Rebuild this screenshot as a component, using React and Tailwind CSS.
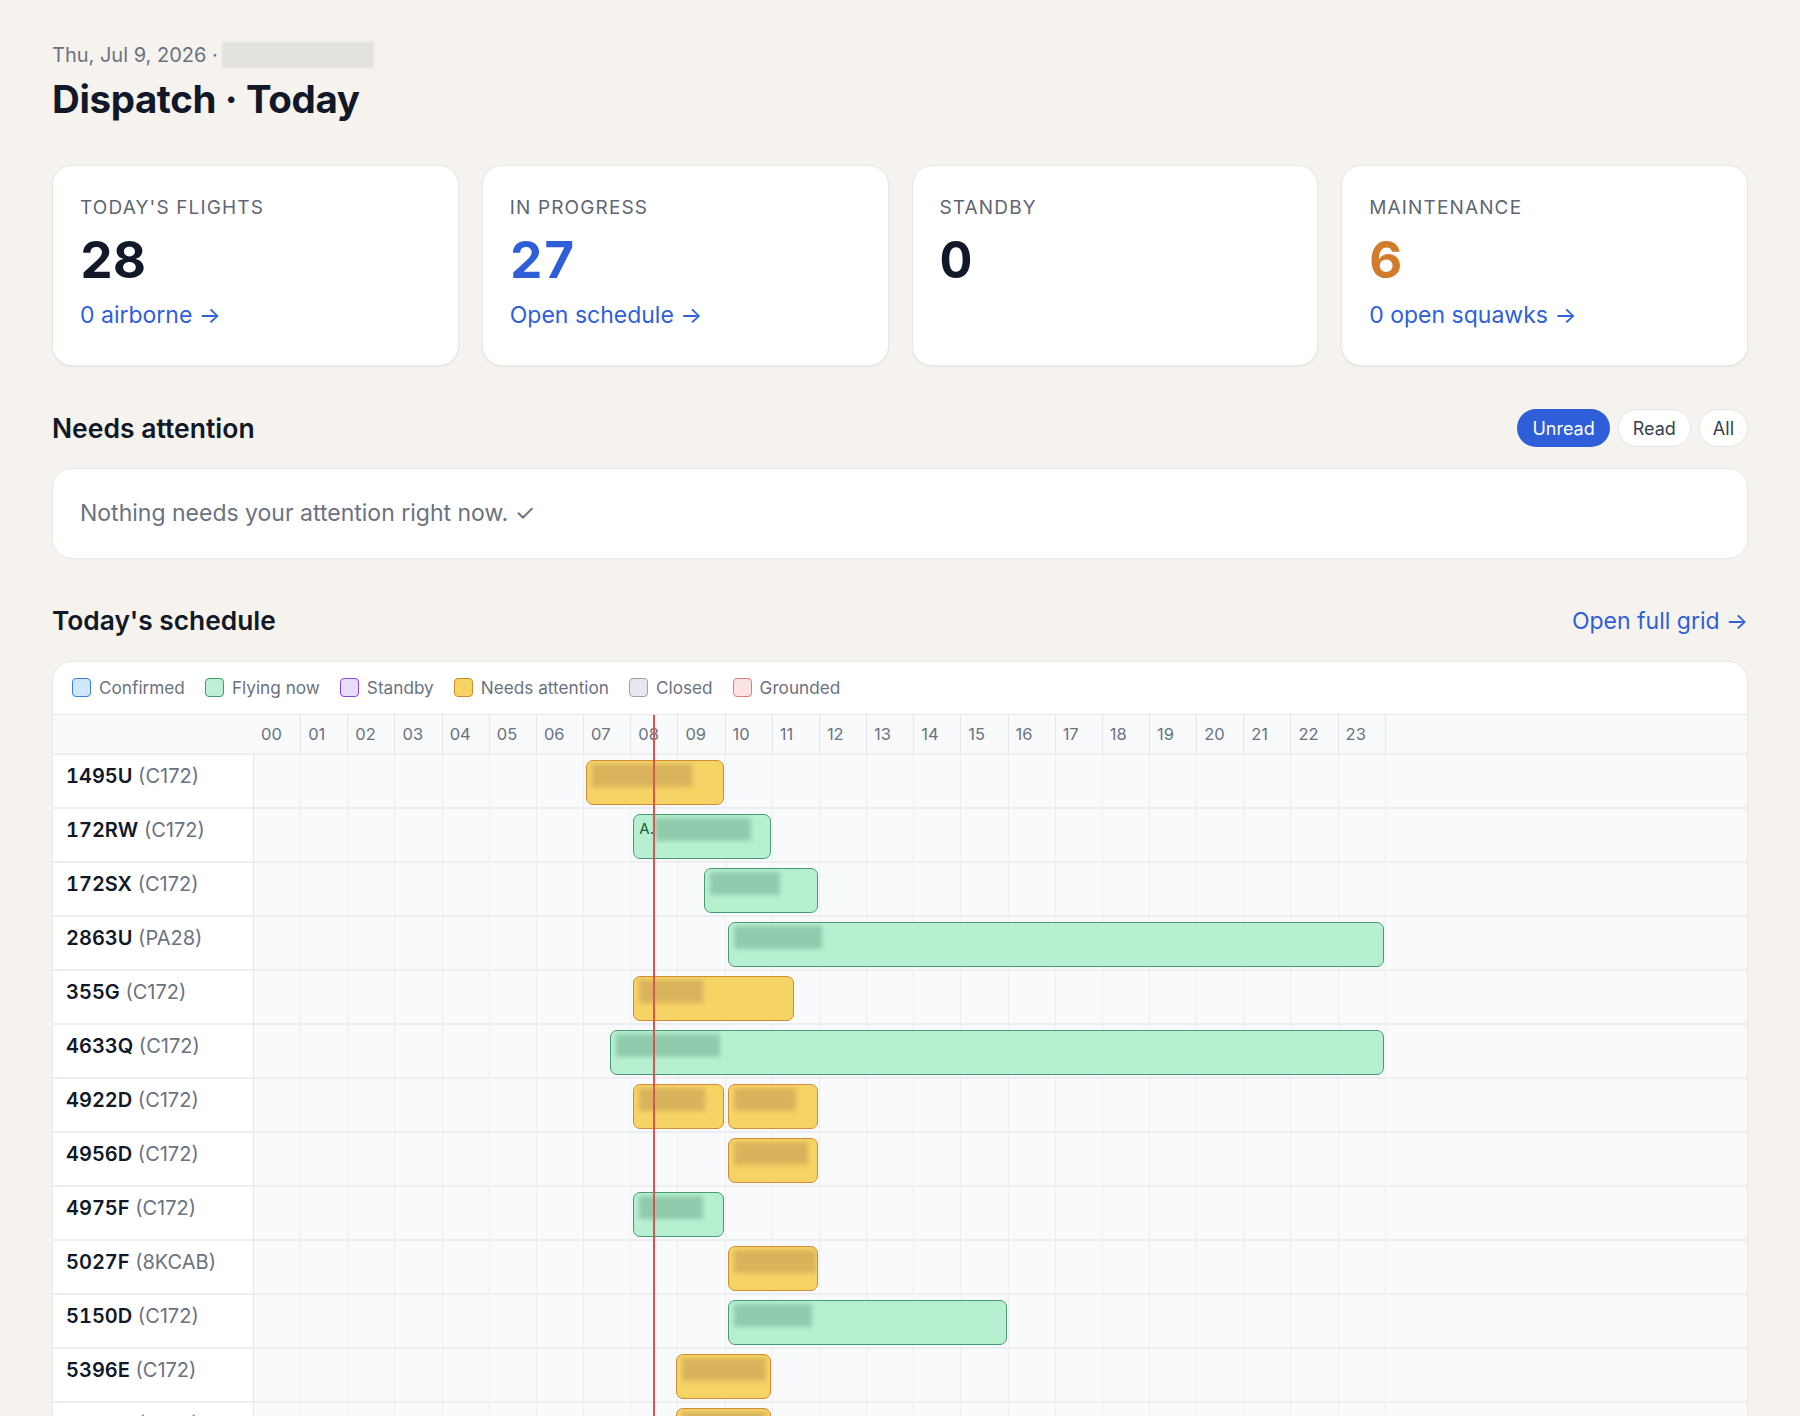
import React from "react";

const HOUR_W = 47.17;

const stats = [
    { label: "Today's flights", value: "28", color: "text-[#111827]", link: "0 airborne" },
    { label: "In progress", value: "27", color: "text-[#2f5fd8]", link: "Open schedule" },
    { label: "Standby", value: "0", color: "text-[#111827]", link: null },
    { label: "Maintenance", value: "6", color: "text-[#d27b2c]", link: "0 open squawks" },
];

const legend = [
    { name: "Confirmed", box: "bg-[#cfe6fb] border-[#3d7fd0]" },
    { name: "Flying now", box: "bg-[#bdf0d4] border-[#3f9a6c]" },
    { name: "Standby", box: "bg-[#e9ddfc] border-[#8a44dd]" },
    { name: "Needs attention", box: "bg-[#f6d365] border-[#d28a2c]" },
    { name: "Closed", box: "bg-[#e5e8ef] border-[#9ba2ae]" },
    { name: "Grounded", box: "bg-[#fde3e3] border-[#e27c7c]" },
];

// s/e = start/end hour on the day grid, c = status colour, blob = width of the redacted label
const aircraft = [
    { tail: "1495U", type: "C172", bars: [{ s: 7, e: 10, c: "y", blob: 100 }] },
    { tail: "172RW", type: "C172", bars: [{ s: 8, e: 11, c: "g", lead: "A.", blob: 96 }] },
    { tail: "172SX", type: "C172", bars: [{ s: 9.5, e: 12, c: "g", blob: 70 }] },
    { tail: "2863U", type: "PA28", bars: [{ s: 10, e: 24, c: "g", blob: 88 }] },
    { tail: "355G", type: "C172", bars: [{ s: 8, e: 11.5, c: "y", blob: 64 }] },
    { tail: "4633Q", type: "C172", bars: [{ s: 7.5, e: 24, c: "g", blob: 104 }] },
    { tail: "4922D", type: "C172", bars: [{ s: 8, e: 10, c: "y", blob: 66 }, { s: 10, e: 12, c: "y", blob: 62 }] },
    { tail: "4956D", type: "C172", bars: [{ s: 10, e: 12, c: "y", blob: 74 }] },
    { tail: "4975F", type: "C172", bars: [{ s: 8, e: 10, c: "g", blob: 64 }] },
    { tail: "5027F", type: "8KCAB", bars: [{ s: 10, e: 12, c: "y", blob: 82 }] },
    { tail: "5150D", type: "C172", bars: [{ s: 10, e: 16, c: "g", blob: 78 }] },
    { tail: "5396E", type: "C172", bars: [{ s: 8.9, e: 11, c: "y", blob: 84 }] },
    { tail: "6126D", type: "C172", bars: [{ s: 8.9, e: 11, c: "y", blob: 84 }] },
    { tail: "6218K", type: "C172", bars: [{ s: 10, e: 13, c: "g", blob: 80 }] },
];

const hours = Array.from({ length: 24 }, (_, i) => String(i).padStart(2, "0"));

function Bar({ bar }) {
    const yellow = bar.c === "y";
    return (
        <div
            className={
                "absolute top-[5px] h-[45px] rounded-[7px] border-[1.5px] overflow-hidden " +
                (yellow ? "bg-[#f6d365] border-[#d28c38]" : "bg-[#b7f0d1] border-[#4a9a72]")
            }
            style={{ left: bar.s * HOUR_W + 2, width: (bar.e - bar.s) * HOUR_W - 4 }}
        >
            <div className="flex items-center pl-[5px] pt-[2px] h-[26px]">
                {bar.lead && <span className="text-[15px] text-[#1e5a40] mr-[1px]">{bar.lead}</span>}
                <span
                    className={"block h-[23px] blur-[2px] " + (yellow ? "bg-[#d9b35c]" : "bg-[#91cbae]")}
                    style={{ width: bar.blob }}
                />
            </div>
        </div>
    );
}

export default function App() {
    return (
        <div className="min-h-screen bg-[#f6f3ee] font-['Inter',sans-serif] px-[52px] pt-[41px] pb-16 text-[#111827]">
            {/* header */}
            <div className="flex items-center text-[20px] leading-[28px] text-[#6b7280]">
                <span>Thu, Jul 9, 2026 ·</span>
                <span className="ml-[4px] inline-block w-[152px] h-[26px] bg-[#e4e2de] blur-[1px]" />
            </div>
            <h1 className="mt-[8px] text-[38.5px] leading-[44px] font-bold tracking-[-0.01em]">Dispatch · Today</h1>

            {/* stat cards */}
            <div className="mt-[44px] grid grid-cols-4 gap-[23px]">
                {stats.map((s) => (
                    <div key={s.label} className="h-[201px] bg-white rounded-[20px] border border-[#e7e8ec] shadow-[0_1px_2px_rgba(0,0,0,0.05)] px-[27px] pt-[29px]">
                        <div className="text-[19px] leading-[25px] uppercase tracking-[0.06em] text-[#5f6673]">{s.label}</div>
                        <div className={"mt-[10px] text-[51px] leading-[60px] font-bold tabular-nums " + s.color}>{s.value}</div>
                        {s.link && (
                            <div className="mt-[11px] text-[23px] leading-[28px] text-[#2f5fd8]">{s.link} →</div>
                        )}
                    </div>
                ))}
            </div>

            {/* needs attention */}
            <div className="mt-[43px] flex items-center justify-between">
                <h2 className="text-[26.5px] leading-[32px] font-semibold">Needs attention</h2>
                <div className="flex gap-[8px]">
                    <button className="h-[38px] px-[15px] rounded-full bg-[#2f5fd8] text-white text-[18px]">Unread</button>
                    <button className="h-[38px] px-[14px] rounded-full bg-white border border-[#e5e7eb] text-[#374151] text-[18px]">Read</button>
                    <button className="h-[38px] px-[13px] rounded-full bg-white border border-[#e5e7eb] text-[#374151] text-[18px]">All</button>
                </div>
            </div>
            <div className="mt-[21px] bg-white rounded-[20px] border border-[#e7e8ec] px-[27px] pt-[30px] pb-[30px] text-[23px] leading-[29px] text-[#6b7280]">
                Nothing needs your attention right now. ✓
            </div>

            {/* schedule */}
            <div className="mt-[46px] flex items-center justify-between">
                <h2 className="text-[26.3px] leading-[32px] font-semibold">Today's schedule</h2>
                <span className="text-[23px] leading-[32px] text-[#2f5fd8]">Open full grid →</span>
            </div>

            <div className="mt-[24px] bg-white rounded-[20px] border border-[#e7e8ec] overflow-hidden">
                <div className="h-[53px] flex items-center gap-[20px] px-[19px] border-b border-[#e5e7eb]">
                    {legend.map((l) => (
                        <div key={l.name} className="flex items-center gap-[8px]">
                            <span className={"w-[19px] h-[19px] rounded-[4px] border-[1.5px] " + l.box} />
                            <span className="text-[17.2px] text-[#6b7280]">{l.name}</span>
                        </div>
                    ))}
                </div>

                <div className="relative">
                    <div className="flex h-[40px] bg-[#f8fafc] border-b-2 border-[#eceef2]">
                        <div className="w-[201px] shrink-0" />
                        {hours.map((h) => (
                            <div key={h} className="w-[47.17px] shrink-0 border-r border-[#e4e7ec] flex items-center pl-[7px] text-[16.5px] text-[#6b7280]">
                                {h}
                            </div>
                        ))}
                    </div>

                    {aircraft.map((a) => (
                        <div key={a.tail} className="flex h-[54px] border-b-2 border-[#eceef2]">
                            <div className="w-[201px] shrink-0 bg-white border-r border-[#e4e7ec] pl-[13px] pt-[8px] text-[20px] leading-[27px]">
                                <span className="font-semibold text-[#111827] tabular-nums">{a.tail}</span>{" "}
                                <span className="text-[#6b7280]">({a.type})</span>
                            </div>
                            <div className="relative flex-1 bg-[#f8fafc]">
                                <div className="flex h-full">
                                    {hours.map((h) => (
                                        <div key={h} className="w-[47.17px] shrink-0 border-r border-[#edf0f3]" />
                                    ))}
                                </div>
                                {a.bars.map((b, i) => (
                                    <Bar key={i} bar={b} />
                                ))}
                            </div>
                        </div>
                    ))}

                    {/* now line */}
                    <div className="absolute top-0 bottom-0 left-[600px] w-[1.5px] bg-[#e0524f]" />
                </div>
            </div>
        </div>
    );
}
